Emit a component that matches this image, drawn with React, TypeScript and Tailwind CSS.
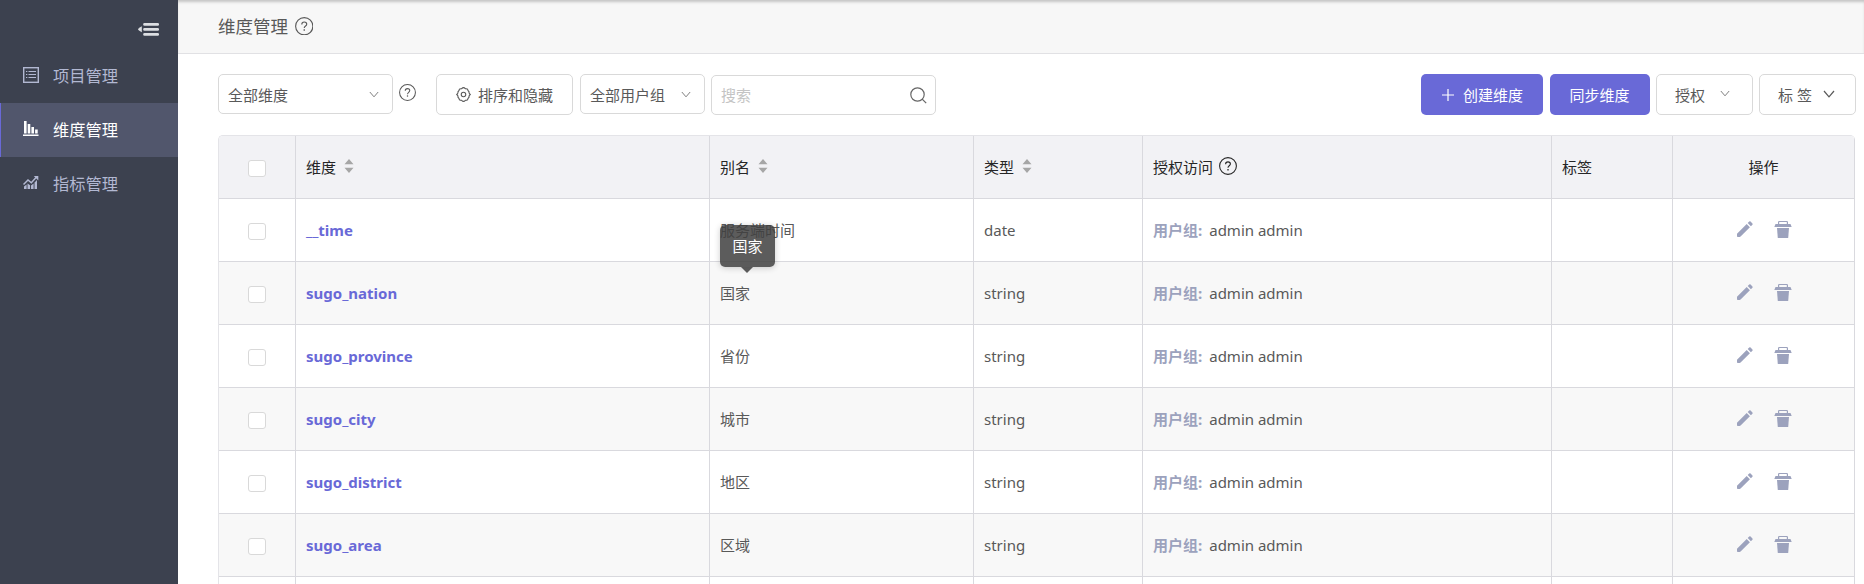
import React from 'react';

const rows = [
  { name: '__time', alias: '服务端时间', type: 'date' },
  { name: 'sugo_nation', alias: '国家', type: 'string' },
  { name: 'sugo_province', alias: '省份', type: 'string' },
  { name: 'sugo_city', alias: '城市', type: 'string' },
  { name: 'sugo_district', alias: '地区', type: 'string' },
  { name: 'sugo_area', alias: '区域', type: 'string' },
];

const COLS = 'grid grid-cols-[77px_414px_264px_169px_409px_121px_182px]';
const CELL = 'flex items-center border-r border-b border-[#d9d9de] px-[10px]';

function Help({ className }: { className: string }) {
  return (
    <svg viewBox="0 0 18 18" fill="none" stroke="currentColor" className={className}>
      <circle cx="9" cy="9" r="8.4" strokeWidth="1.1" />
      <path d="M6.6 7.2C6.6 5.7 7.6 4.9 9 4.9s2.4.9 2.4 2.1c0 1.7-2.4 1.9-2.4 3.8" strokeWidth="1.1" />
      <path d="M9 12v1.4" strokeWidth="1.3" />
    </svg>
  );
}

function Chevron({ className }: { className: string }) {
  return (
    <svg viewBox="0 0 12 8" fill="none" stroke="currentColor" strokeWidth="1.2" className={className}>
      <path d="M1 1l5 5.8L11 1" />
    </svg>
  );
}

function Gear() {
  return (
    <svg viewBox="0 0 14 14" fill="none" stroke="currentColor" strokeLinejoin="round" className="size-[15px]">
      <path d="M5.3 1.6Q7 -.4 8.7 1.6Q11.1 1.300 11.100 3.100L12.200 4.600Q11.800 6 13.400 7Q11.800 8 12.200 9.400L11.100 10.900Q11.100 12.700 8.700 12.400Q7 14.400 5.300 12.400Q2.900 12.700 2.900 10.900L1.800 9.400Q2.200 8 .6 7Q2.200 6 1.800 4.600L2.900 3.100Q2.900 1.300 5.300 1.600Z" />
      <circle cx="7" cy="7" r="2.1" />
    </svg>
  );
}

function Sorter() {
  return (
    <svg viewBox="0 0 10 16" fill="#a6a6a6" className="ml-[8px] h-[16px] w-[10px] -translate-y-px">
      <path d="M.5 6.300L5 1l4.500 5.300zM.5 9.700L5 15l4.500-5.300z" />
    </svg>
  );
}

function Checkbox() {
  return <span className="mt-[3px] mr-[1px] h-[17px] w-[18px] rounded-[3px] border border-[#d9d9d9] bg-white" />;
}

function Pencil() {
  return (
    <svg viewBox="0 0 16 16" fill="#9ca2bd" className="size-[16px]">
      <path d="M0 15.200v-2.400L9.700 3.100l3.200 3.200L3.600 15.600Q3.200 16 2.600 16H.8Q0 16 0 15.200zM10.700 2.100L12.200.6q.7-.7 1.400 0l1.800 1.800q.7.7 0 1.400L13.900 5.300z" />
    </svg>
  );
}

function Trash() {
  return (
    <svg viewBox="0 0 18 17" fill="#9ca2bd" className="h-[17px] w-[18px]">
      <path fillRule="evenodd" d="M4 3V1.2Q4 0 5.200 0h7.600Q14 0 14 1.200V3h2.500l1.200 3H.3l1.200-3zM5.200 1.100V3h7.600V1.100z" />
      <path d="M3 7h12l-.8 10H3.800z" />
    </svg>
  );
}

function MenuItem({ label, active, children }: { label: string; active?: boolean; children: React.ReactNode }) {
  return (
    <div
      className={
        active
          ? 'flex h-[54px] items-center border-l border-[#6969d7] bg-[#51566c] pl-[22px] text-white'
          : 'flex h-[54px] items-center border-l border-transparent pl-[22px] text-[#b2b8d2]'
      }
    >
      {children}
      <span className="ml-[14px]">{label}</span>
    </div>
  );
}

export default function App() {
  return (
    <div className="flex h-[584px] w-[1864px] overflow-hidden bg-white font-['Noto_Sans','Noto_Sans_CJK_SC',sans-serif] text-[15px] leading-[22px] text-[#595959]">
      <aside className="w-[178px] shrink-0 bg-[#3c414f] text-[16.25px]">
        <div className="flex h-[49px] justify-end pt-[22px] pr-[19px]">
          <svg viewBox="0 0 21 14" className="h-[14px] w-[21px] text-[#dcdee2]" fill="currentColor">
            <path d="M0 7.200Q0 6.500 3.800 4.200v6Q0 8 0 7.200z" />
            <rect x="5.200" y="1" width="15.800" height="2.800" rx="1.200" />
            <rect x="5.200" y="6" width="15.800" height="2.800" rx="1.200" />
            <rect x="5.200" y="11" width="15.800" height="2.800" rx="1.200" />
          </svg>
        </div>
        <MenuItem label="项目管理">
          <svg viewBox="0 0 16 16" className="size-[16px] -translate-y-[1px]" fill="none" stroke="currentColor">
            <rect x=".7" y=".7" width="14.6" height="14.6" strokeWidth="1.4" />
            <path d="M5.5 4.500H13M5.500 7.500H13M5.500 10.500H13M3 4.500h1.300M3 7.500h1.300M3 10.500h1.300" strokeWidth="1.100" />
          </svg>
        </MenuItem>
        <MenuItem label="维度管理" active>
          <svg viewBox="0 0 16 16" className="size-[16px] -translate-y-[1px]" fill="currentColor">
            <path d="M1 0h2.600v12.500H1zM4.700 3h2.600v9.500H4.700zM8.400 6H11v6.500H8.400zM12.100 8.500h2.600v4h-2.600zM0 13.500h15.500V15H0z" />
          </svg>
        </MenuItem>
        <MenuItem label="指标管理">
          <svg viewBox="0 0 16 16" className="size-[16px] -translate-y-[1px]" fill="currentColor">
            <path d="M1 11.500l2.600-2V14H1zM4.500 8.500l2.600 1.800V14H4.500zM8 10.500l2.600-2V14H8zM11.500 7.500L14 5v9h-2.500z" />
            <path d="M.5 9.500L5 5l3.300 2.800L13.500 2" fill="none" stroke="currentColor" strokeWidth="1.5" />
            <path d="M10.800 1h4.500v4.500z" />
          </svg>
        </MenuItem>
      </aside>

      <main className="min-w-0 flex-1">
        <header className="flex h-[54px] items-center border-b border-[#e1e1e4] bg-[#f7f7f7] pb-[1px] pl-[40px] text-[17.5px] shadow-[inset_0_3px_3px_-1px_#c4c4c4]">
          <span>维度管理</span>
          <Help className="ml-[6.500px] size-[18.500px]" />
        </header>

        <div className="flex h-[81px] items-start pt-[20px] pr-[8px] pl-[40px]">
          <div className="flex h-[40px] w-[175px] items-center justify-between rounded-[5px] border border-[#d9d9d9] pt-px pr-[13px] pl-[9px]">
            全部维度
            <Chevron className="h-[7px] w-[10px] text-[#808080]" />
          </div>
          <Help className="mt-[10px] ml-[6px] size-[17px]" />
          <button className="ml-[20px] flex h-[41px] w-[137px] items-center rounded-[5px] border border-[#d9d9d9] pl-[19px]">
            <Gear />
            <span className="ml-[7px]">排序和隐藏</span>
          </button>
          <div className="ml-[7px] flex h-[40px] w-[125px] items-center justify-between rounded-[5px] border border-[#d9d9d9] pt-px pr-[13px] pl-[9px]">
            全部用户组
            <Chevron className="h-[7px] w-[10px] text-[#808080]" />
          </div>
          <div className="mt-px ml-[6px] flex h-[40px] w-[225px] items-center justify-between rounded-[5px] border border-[#d9d9d9] pr-[8px] pl-[9px] text-[#c4c4c4]">
            搜索
            <svg viewBox="0 0 17 17" fill="none" stroke="#666666" strokeWidth="1.2" className="size-[17px]">
              <circle cx="7.500" cy="7.500" r="6.700" />
              <path d="M12.200 12.200l4 4" />
            </svg>
          </div>
          <button className="ml-auto flex h-[41px] w-[122px] items-center rounded-[5px] bg-[#6969d7] pl-[21px] text-white">
            <svg viewBox="0 0 12 12" stroke="currentColor" strokeWidth="1.2" className="size-[12px]">
              <path d="M6 0v12M0 6h12" />
            </svg>
            <span className="ml-[9px]">创建维度</span>
          </button>
          <button className="ml-[7px] h-[41px] w-[100px] rounded-[5px] bg-[#6969d7] pr-px text-white">同步维度</button>
          <button className="ml-[6px] flex h-[41px] w-[97px] items-center justify-between rounded-[5px] border border-[#d9d9d9] pr-[22px] pl-[18px]">
            授权
            <Chevron className="h-[7px] w-[10px] -translate-y-px text-[#808080]" />
          </button>
          <button className="ml-[6px] flex h-[41px] w-[97px] items-center justify-between rounded-[5px] border border-[#d9d9d9] pr-[20px] pl-[18px]">
            标 签
            <Chevron className="h-[8px] w-[12px] -translate-y-px" />
          </button>
        </div>

        <div className="ml-[40px] w-[1637px] overflow-hidden rounded-t-[5px] border-t border-l border-[#e4e4e8]">
          <div className={COLS + ' h-[63px] bg-[#f2f2f5] text-[#262626]'}>
            <div className={CELL + ' justify-center'}><Checkbox /></div>
            <div className={CELL}>维度<Sorter /></div>
            <div className={CELL}>别名<Sorter /></div>
            <div className={CELL}>类型<Sorter /></div>
            <div className={CELL}>授权访问<Help className="ml-[6px] size-[18px] -translate-y-px" /></div>
            <div className={CELL}>标签</div>
            <div className={CELL + ' justify-center'}>操作</div>
          </div>
          {rows.map((r, i) => (
            <div key={r.name} className={COLS + (i % 2 ? ' h-[63px] bg-[#f8f8f8]' : ' h-[63px] bg-white')}>
              <div className={CELL + ' justify-center'}><Checkbox /></div>
              <div className={CELL + ' font-bold text-[#6969d7]'}>{r.name}</div>
              <div className={CELL}>
                <span className="relative">
                  {r.alias}
                  {i === 1 && (
                    <span className="absolute bottom-[37px] left-0 flex h-[42px] w-[55px] items-center justify-center rounded-[5px] bg-[#404040]/85 text-white shadow-[0_1px_6px_rgba(0,0,0,0.2)]">
                      国家
                      <svg viewBox="0 0 12 6" className="absolute top-full left-[21px] h-[6px] w-[12px]" fill="#404040" fillOpacity=".85">
                        <path d="M0 0h12L6 6z" />
                      </svg>
                    </span>
                  )}
                </span>
              </div>
              <div className={CELL}>{r.type}</div>
              <div className={CELL}>
                <span className="mr-[7px] font-bold text-[#9ca2bd]">用户组:</span>admin admin
              </div>
              <div className={CELL} />
              <div className={CELL + ' justify-center gap-[21px] pb-[2px] pl-[12px]'}>
                <Pencil />
                <Trash />
              </div>
            </div>
          ))}
          <div className={COLS + ' h-[63px]'}>
            {[0, 1, 2, 3, 4, 5, 6].map((n) => (
              <div key={n} className={CELL} />
            ))}
          </div>
        </div>
      </main>
    </div>
  );
}
